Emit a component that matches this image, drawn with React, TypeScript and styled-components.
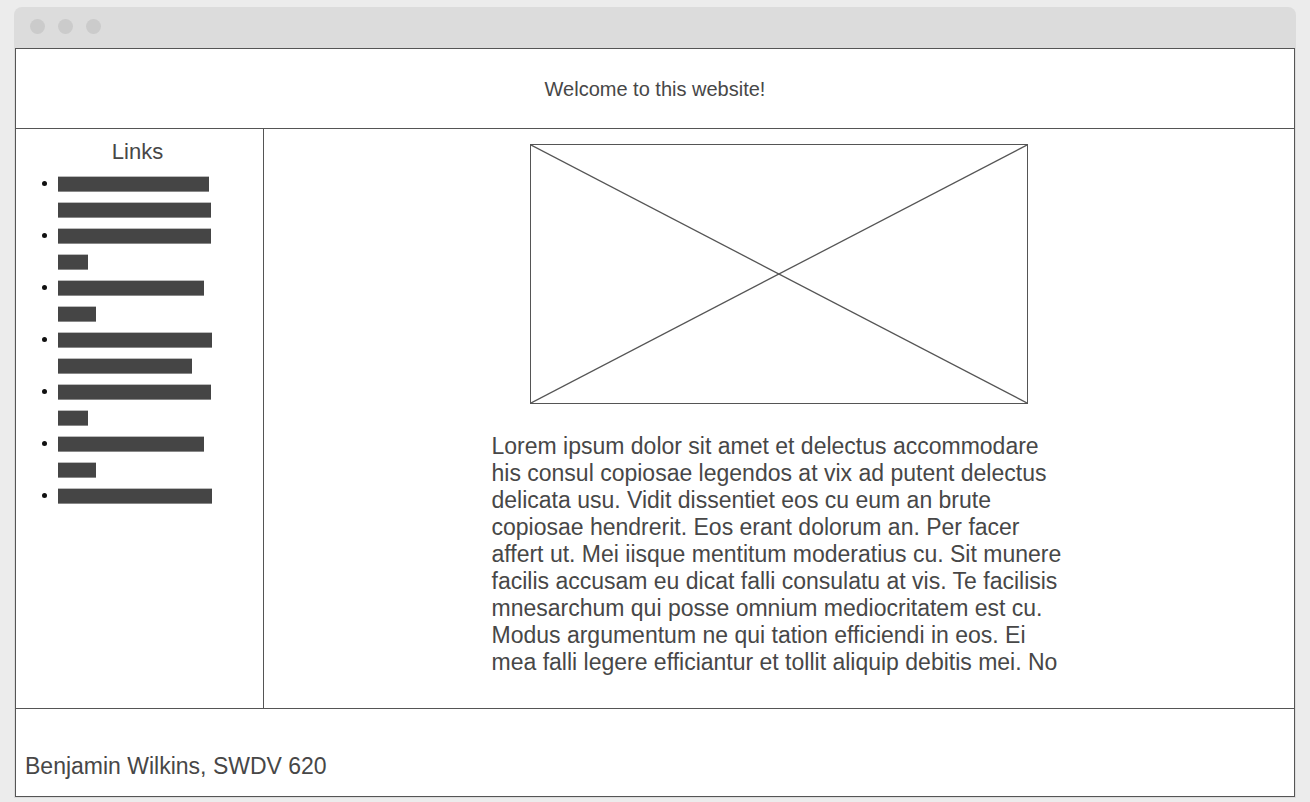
import React from "react";
import styled, { createGlobalStyle } from "styled-components";

const GlobalStyle = createGlobalStyle`
  html, body {
    margin: 0;
    padding: 0;
    background: #ececec;
    font-family: "Liberation Sans", Arial, sans-serif;
    color: #474747;
  }
  * { box-sizing: border-box; }
`;

const Window = styled.div`
  width: 1282px;
  height: 791px;
  margin: 7px 0 0 14px;
  background: #dcdcdc;
  border-radius: 8px 8px 0 0;
  display: flex;
  flex-direction: column;
`;

const TitleBar = styled.div`
  height: 41px;
  display: flex;
  align-items: center;
  gap: 13px;
  padding: 0 0 2px 16px;
  flex-shrink: 0;
`;

const Dot = styled.span`
  width: 15px;
  height: 15px;
  border-radius: 50%;
  background: #cbcbcb;
`;

const Frame = styled.div`
  margin: 0 1px 1px 1px;
  height: 750px;
  border: 1px solid #555;
  background: #fff;
  display: grid;
  grid-template-rows: 80px 580px 1fr;
`;

const Header = styled.header`
  border-bottom: 1px solid #555;
  display: flex;
  align-items: center;
  justify-content: center;
  font-size: 20px;
  padding-top: 1px;
`;

const Middle = styled.div`
  border-bottom: 1px solid #555;
  display: grid;
  grid-template-columns: 248px 1fr;
  overflow: hidden;
`;

const Sidebar = styled.nav`
  border-right: 1px solid #555;
  padding-top: 10px;
`;

const SideTitle = styled.div`
  text-align: center;
  font-size: 22px;
  line-height: 26px;
  padding-right: 4px;
`;

const LinkList = styled.ul`
  list-style: none;
  margin: 6px 0 0 0;
  padding: 0 0 0 26px;
`;

const LinkItem = styled.li`
  display: grid;
  grid-template-columns: 5px 1fr;
  column-gap: 11px;
`;

const Bullet = styled.span`
  width: 5px;
  height: 5px;
  border-radius: 50%;
  background: #111;
  margin-top: 10px;
`;

const BarStack = styled.div`
  display: flex;
  flex-direction: column;
`;

const BarRow = styled.div`
  height: 26px;
  display: flex;
  align-items: center;
`;

const Bar = styled.span<{ $w: number }>`
  display: block;
  width: ${(p) => p.$w}px;
  height: 14px;
  background: #454545;
  box-shadow: 0 -1px 0 #bbb, 0 1px 0 #888;
`;

const Content = styled.main`
  display: flex;
  flex-direction: column;
  align-items: center;
  padding-top: 15px;
`;

const Placeholder = styled.div`
  width: 498px;
  height: 260px;
  border: 1px solid #555;
  flex-shrink: 0;

  svg {
    display: block;
    width: 100%;
    height: 100%;
  }
`;

const Paragraph = styled.p`
  width: 575px;
  margin: 29px 0 0 0;
  font-size: 23px;
  line-height: 27px;
`;

const Footer = styled.footer`
  display: flex;
  align-items: flex-end;
  padding: 0 0 16px 9px;
  font-size: 23px;
  line-height: 27px;
`;

const links: number[][] = [
  [151, 153],
  [153, 30],
  [146, 38],
  [154, 134],
  [153, 30],
  [146, 38],
  [154],
];

export default function App() {
  return (
    <>
      <GlobalStyle />
      <Window>
        <TitleBar>
          <Dot />
          <Dot />
          <Dot />
        </TitleBar>
        <Frame>
          <Header>Welcome to this website!</Header>
          <Middle>
            <Sidebar>
              <SideTitle>Links</SideTitle>
              <LinkList>
                {links.map((bars, i) => (
                  <LinkItem key={i}>
                    <Bullet />
                    <BarStack>
                      {bars.map((w, j) => (
                        <BarRow key={j}>
                          <Bar $w={w} />
                        </BarRow>
                      ))}
                    </BarStack>
                  </LinkItem>
                ))}
              </LinkList>
            </Sidebar>
            <Content>
              <Placeholder>
                <svg viewBox="0 0 496 258" preserveAspectRatio="none">
                  <line x1="0" y1="0" x2="496" y2="258" stroke="#555" strokeWidth="1.3" />
                  <line x1="496" y1="0" x2="0" y2="258" stroke="#555" strokeWidth="1.3" />
                </svg>
              </Placeholder>
              <Paragraph>
                Lorem ipsum dolor sit amet et delectus accommodare his consul copiosae legendos at vix ad
                putent delectus delicata usu. Vidit dissentiet eos cu eum an brute copiosae hendrerit. Eos
                erant dolorum an. Per facer affert ut. Mei iisque mentitum moderatius cu. Sit munere facilis
                accusam eu dicat falli consulatu at vis. Te facilisis mnesarchum qui posse omnium
                mediocritatem est cu. Modus argumentum ne qui tation efficiendi in eos. Ei mea falli legere
                efficiantur et tollit aliquip debitis mei. No
              </Paragraph>
            </Content>
          </Middle>
          <Footer>Benjamin Wilkins, SWDV 620</Footer>
        </Frame>
      </Window>
    </>
  );
}
